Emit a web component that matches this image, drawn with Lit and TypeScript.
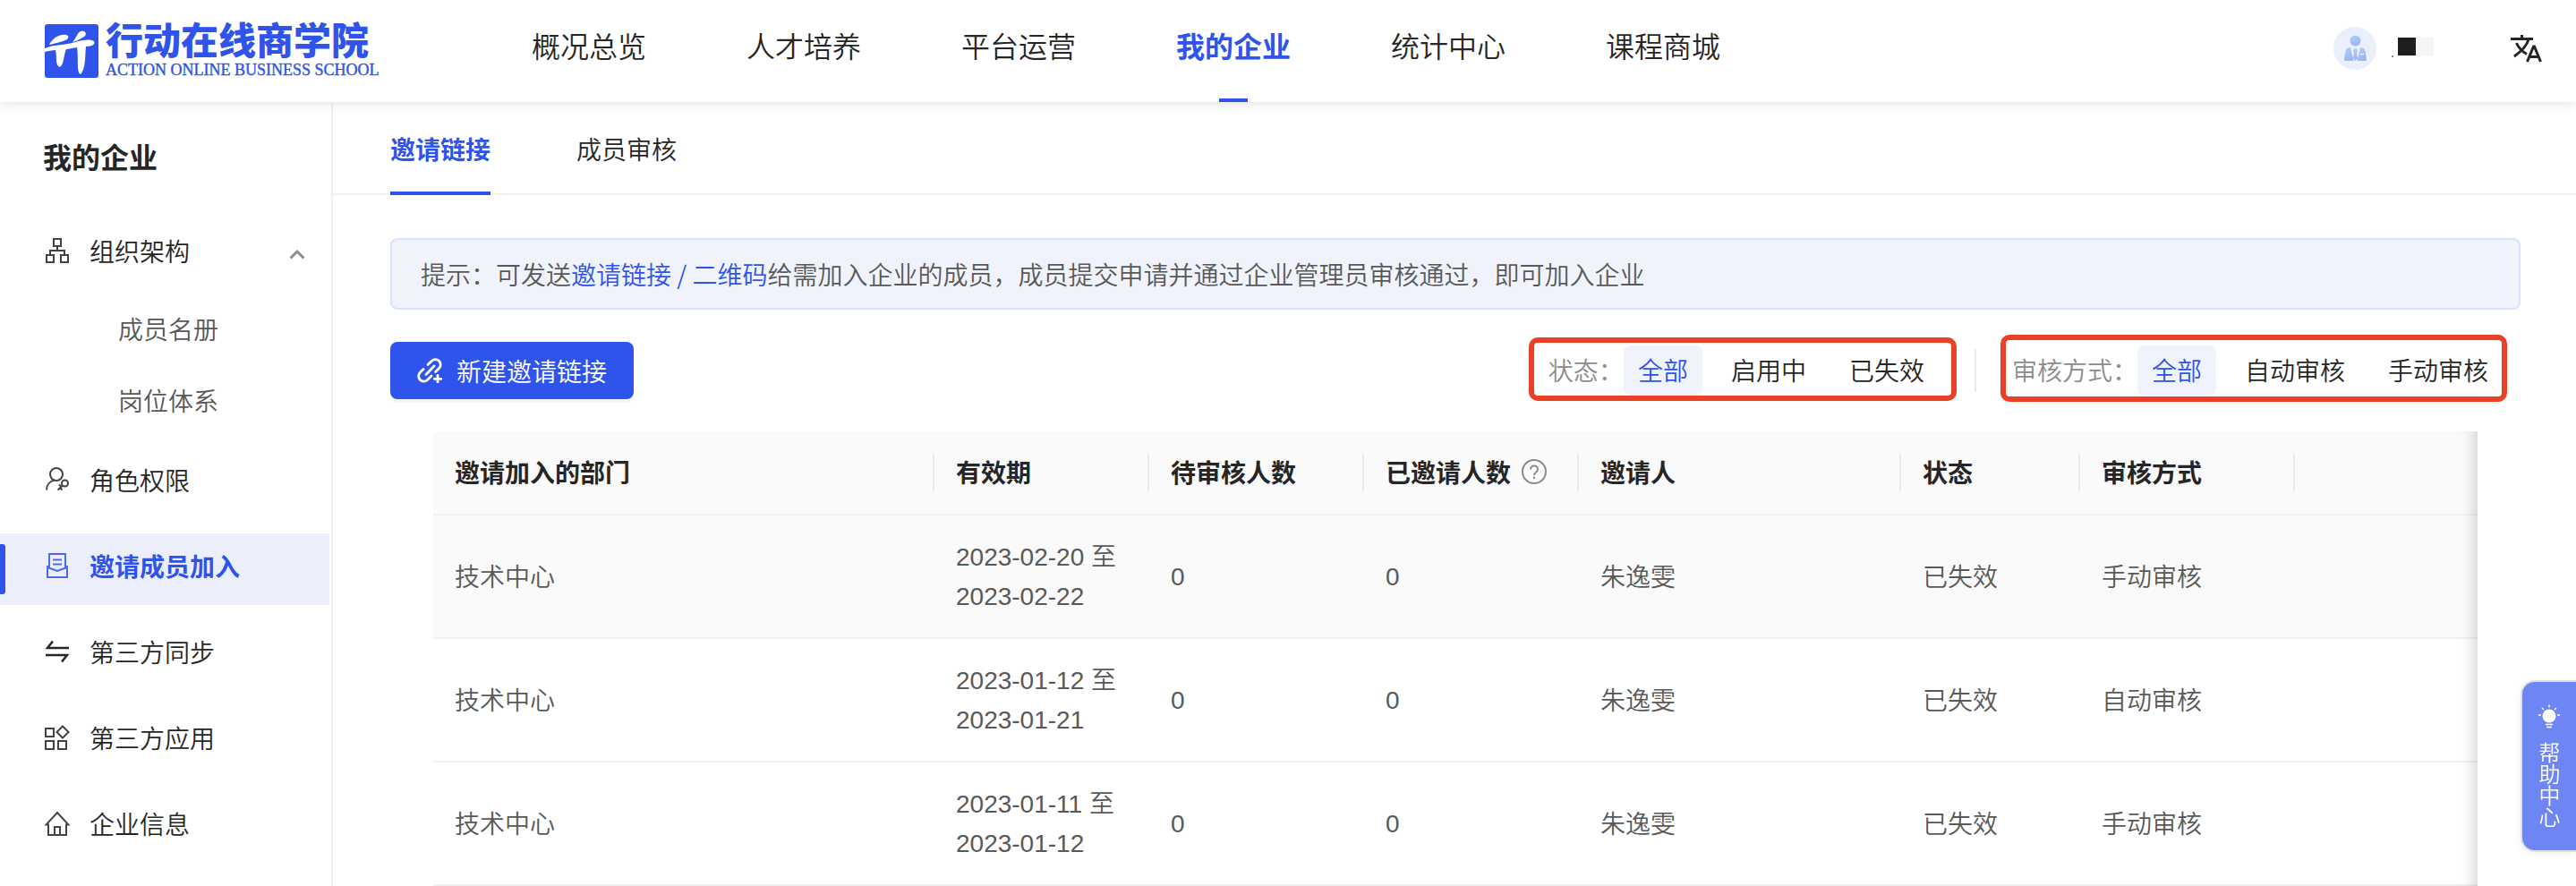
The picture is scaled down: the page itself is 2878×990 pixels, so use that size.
import { LitElement, html, css, svg } from "lit";
import { customElement, state } from "lit/decorators.js";
import { classMap } from "lit/directives/class-map.js";

type MenuItem = { label: string; icon: unknown; children?: string[] };
type Invite = { dept: string; from: string; to: string; pending: number; invited: number; inviter: string; status: string; review: string };

const icons = {
  org: svg`<rect x="10" y="1" width="8" height="8"/><path d="M14 9v5M6 18v-4h16v4"/><rect x="2" y="19" width="8" height="8"/><rect x="18" y="19" width="8" height="8"/>`,
  role: svg`<circle cx="13" cy="8" r="7"/><path d="M2 25.500C2 19.500 6 15.500 11 14.500"/><circle cx="22.500" cy="18" r="3.500"/><path d="M20 20.500l-5.500 5M16 19.500l2.500 2.500M17.500 23.500l2 2"/>`,
  invite: svg`<path d="M5 16V1h18v15M5 15H3v12h22V15h-2M3 16l11 4 11-4M9 7.500h10M9 12.500h10"/>`,
  sync: svg`<path d="M9 2.500L3 10h24M1 18h24l-6 7.500"/>`,
  apps: svg`<rect x="1" y="4" width="9" height="9"/><rect x="1" y="18" width="9" height="9"/><rect x="15" y="18" width="9" height="9"/><path d="M20 1.500l6.500 6.500-6.500 6.500L13.500 8z"/>`,
  home: svg`<path d="M4 15.500H1.500L14 2l12.500 13.500H24V27H4zM11 27v-9h6v9"/>`,
};

const NAV = ["概况总览", "人才培养", "平台运营", "我的企业", "统计中心", "课程商城"];

const MENU: MenuItem[] = [
  { label: "组织架构", icon: icons.org, children: ["成员名册", "岗位体系"] },
  { label: "角色权限", icon: icons.role },
  { label: "邀请成员加入", icon: icons.invite },
  { label: "第三方同步", icon: icons.sync },
  { label: "第三方应用", icon: icons.apps },
  { label: "企业信息", icon: icons.home },
];

const INVITES: Invite[] = [
  { dept: "技术中心", from: "2023-02-20", to: "2023-02-22", pending: 0, invited: 0, inviter: "朱逸雯", status: "已失效", review: "手动审核" },
  { dept: "技术中心", from: "2023-01-12", to: "2023-01-21", pending: 0, invited: 0, inviter: "朱逸雯", status: "已失效", review: "自动审核" },
  { dept: "技术中心", from: "2023-01-11", to: "2023-01-12", pending: 0, invited: 0, inviter: "朱逸雯", status: "已失效", review: "手动审核" },
];

@customElement("app-header")
class AppHeader extends LitElement {
  static styles = css`
    :host { display: flex; height: 114px; padding: 0 38px 0 50px; box-sizing: border-box; background: #fff;
      box-shadow: 0 2px 12px rgba(0, 21, 41, .12); position: relative; z-index: 2; }
    .logo { display: flex; align-items: center; gap: 8px; width: 368px; flex: none; color: #2f54eb; text-decoration: none; }
    .mark { width: 60px; height: 60px; display: block; flex: none; }
    .name { display: block; font: 900 42px/42px "Liberation Sans", "Noto Sans CJK SC", sans-serif; white-space: nowrap; }
    .en { display: block; font: 18px/20px "Liberation Serif", serif; white-space: nowrap; -webkit-text-stroke: 0.4px #2f54eb; }
    nav { display: flex; gap: 112px; margin-left: 176px; }
    .link { display: flex; flex-direction: column; align-items: center; justify-content: space-between; color: #262626; text-decoration: none;
      font-size: 32px; line-height: 48px; padding-top: 26px; white-space: nowrap; }
    .link.on { color: #2f54eb; font-weight: 700; }
    .bar { width: 32px; height: 4px; }
    .on .bar { background: #2f54eb; }
    .user { display: flex; align-items: center; margin-left: auto; padding-bottom: 6px; }
    .avatar { width: 48px; height: 48px; }
    .mask { width: 50px; height: 24px; margin: 0 84px 0 15px; }
    .lang { width: 36px; height: 36px; padding: 0; border: 0; background: none; }
  `;
  render() {
    return html`
      <a class="logo" href="#">
        <svg class="mark" viewBox="0 0 60 60" aria-hidden="true">
          <rect width="60" height="60" rx="3" fill="#2f54eb"/>
          <g fill="#fff">
            <path d="M5 23C8 17 14 12 20 12C26 11 28 14 25 17C19 20 12 21 5 23z"/>
            <path d="M31 20C37 14 36 8 42 7.500C47 8 47 13 43 14.500C39 17 36 19 31 20z"/>
            <path d="M0 27C12 22 22 24 34 20C42 18 50 16 55 19C57 22 53 25 46 25C45 34 46 50 40 56C35 54 38 38 36 26L24 28C21 34 22 44 17 48C11 46 14 36 12 29C8 29 4 30 0 31z"/>
          </g>
        </svg>
        <span><span class="name">行动在线商学院</span><span class="en">ACTION ONLINE BUSINESS SCHOOL</span></span>
      </a>
      <nav>
        ${NAV.map((n) => html`<a href="#" class=${classMap({ link: true, on: n === "我的企业" })}>${n}<span class="bar"></span></a>`)}
      </nav>
      <div class="user">
        <svg class="avatar" viewBox="0 0 48 48" aria-label="头像">
          <defs><linearGradient id="g" x1="0" y1="0" x2="0.4" y2="1"><stop offset="0" stop-color="#b3d0f8"/><stop offset="1" stop-color="#9cb4f5"/></linearGradient></defs>
          <circle cx="24" cy="24" r="24" fill="#e9f0fc"/>
          <g fill="url(#g)"><circle cx="24.500" cy="15.500" r="6"/>
          <path d="M16 23.500c2-.5 2.500-.5 3 0L22.500 38H12c.5-6 1-13 4-14.500z"/>
          <path d="M33 23.500c-2-.5-2.500-.5-3 0L26.500 38H37c-.5-6-1-13-4-14.500z"/>
          <path d="M23 24.500h3l.8 2.500-.8 2.500 1.200 5.500-2.700 3-2.700-3 1.200-5.500-.8-2.500z"/></g>
          <path d="M30 30.500h4" stroke="#fff"/>
        </svg>
        <svg class="mask" viewBox="0 0 50 24" aria-hidden="true">
          <rect x="2" y="20" width="2" height="2" fill="#888"/><rect x="9" y="0" width="20" height="20" fill="#1f1f1f"/><rect x="29" y="0" width="20" height="20" fill="#f5f5f5"/>
        </svg>
        <button class="lang" aria-label="切换语言">
          <svg viewBox="0 0 36 36" width="36" height="36" fill="none" stroke="#262626" stroke-width="3">
            <path d="M1 7.500h25M13.500 3v4.500M21 8C19 16 12 22 5 27M7.500 12c2.500 6 6.500 9.500 11.500 12.500"/>
            <path d="M19.500 33l7-17h1l7 17M22 27.500h10"/>
          </svg>
        </button>
      </div>`;
  }
}

@customElement("side-menu")
class SideMenu extends LitElement {
  @state() open = true;
  static styles = css`
    :host { display: block; width: 372px; flex: none; box-sizing: border-box; border-right: 2px solid #f0f0f0; padding-right: 2px; color: #262626; }
    h2 { margin: 0; padding: 36px 48px 46px; font-size: 32px; line-height: 48px; font-weight: 700; }
    ul { list-style: none; margin: 0; padding: 0; }
    .menu { display: flex; flex-direction: column; gap: 16px; }
    .sub { padding: 8px 0 0; margin-bottom: -8px; }
    .row { display: flex; align-items: center; gap: 22px; width: 100%; height: 80px; box-sizing: border-box; padding: 0 26px 8px 50px;
      border: 0; background: none; font: inherit; color: inherit; text-decoration: none; text-align: left; position: relative; }
    .sub .row { padding: 0 26px 10px 132px; color: #595959; }
    .row svg { width: 28px; height: 28px; flex: none; fill: none; stroke: #434343; stroke-width: 2; }
    .row .chev { margin-left: auto; width: 20px; stroke: #8c8c8c; stroke-width: 3; }
    .row.dark svg { stroke: #262626; stroke-width: 2.5; }
    .row.on { background: #eceffb; color: #2f54eb; font-weight: 700; }
    .row.on svg { stroke: #4a6bf0; }
    .row.on::before { content: ""; position: absolute; left: 0; top: 12px; bottom: 12px; width: 6px; border-radius: 0 3px 3px 0; background: #2f54eb; }
  `;
  render() {
    return html`<h2>我的企业</h2>
      <ul class="menu">
        ${MENU.map((m) => m.children
          ? html`<li>
              <button class="row" aria-expanded=${this.open} @click=${() => (this.open = !this.open)}>
                <svg viewBox="0 0 28 28" aria-hidden="true">${m.icon}</svg>${m.label}
                <svg class="chev" viewBox="0 0 20 28" aria-hidden="true"><path d="M2.500 22.500L10 15l7.500 7.500"/></svg>
              </button>
              ${this.open ? html`<ul class="sub">${m.children.map((c) => html`<li><a class="row" href="#">${c}</a></li>`)}</ul>` : ""}
            </li>`
          : html`<li><a href="#" class=${classMap({ row: true, on: m.label === "邀请成员加入", dark: m.label === "第三方同步" })}>
              <svg viewBox="0 0 28 28" aria-hidden="true">${m.icon}</svg>${m.label}</a></li>`)}
      </ul>`;
  }
}

@customElement("invite-table")
class InviteTable extends LitElement {
  static styles = css`
    :host { display: block; position: relative; }
    :host::after { content: ""; position: absolute; inset: 0 0 0 auto; width: 40px; box-shadow: inset -20px 0 16px -16px rgba(0, 0, 0, .17); pointer-events: none; }
    table { width: 100%; table-layout: fixed; border-collapse: separate; border-spacing: 0; line-height: 44px; color: #595959; }
    th, td { padding: 23px 24px 25px; text-align: left; border-bottom: 2px solid #f0f0f0; }
    th { background: #fafafa; color: #262626; font-weight: 700; white-space: nowrap;
      background-image: linear-gradient(#ebebeb, #ebebeb); background-size: 2px 44px; background-repeat: no-repeat; background-position: right center; }
    th:first-child { border-radius: 4px 0 0 0; }
    th:last-child { background-image: none; }
    td.num { padding: 25px 24px 23px; font-family: "Liberation Sans", "Noto Sans CJK SC", sans-serif; }
    .hover td { background: #fafafa; }
    .w560 { width: 560px; } .w240 { width: 240px; } .w360 { width: 360px; } .w200 { width: 200px; }
    .head { display: flex; align-items: center; gap: 12px; }
    .q { width: 28px; height: 28px; flex: none; }
  `;
  render() {
    return html`<table>
      <colgroup><col class="w560"><col class="w240"><col class="w240"><col class="w240"><col class="w360"><col class="w200"><col class="w240"><col></colgroup>
      <thead><tr>
        <th>邀请加入的部门</th><th>有效期</th><th>待审核人数</th>
        <th><span class="head">已邀请人数<svg class="q" viewBox="0 0 28 28" fill="none" stroke="#8c8c8c" stroke-width="2" aria-label="说明"><circle cx="14" cy="14" r="13"/><path d="M10 11.500c0-5.500 8-5.500 8 0 0 3.500-4 3-4 6.500M14 19.500v2.500"/></svg></span></th>
        <th>邀请人</th><th>状态</th><th>审核方式</th><th></th>
      </tr></thead>
      <tbody>
        ${INVITES.map((r, i) => html`<tr class=${classMap({ hover: i === 0 })}>
          <td>${r.dept}</td><td class="num">${r.from} 至<br>${r.to}</td><td class="num">${r.pending}</td><td class="num">${r.invited}</td>
          <td>${r.inviter}</td><td>${r.status}</td><td>${r.review}</td><td></td>
        </tr>`)}
      </tbody>
    </table>`;
  }
}

@customElement("app-root")
class AppRoot extends LitElement {
  @state() status = "全部";
  @state() review = "全部";
  static styles = css`
    :host { display: flex; flex-direction: column; min-height: 100vh; background: #fff; color: #262626;
      font: 350 28px/44px "Noto Sans CJK SC", "Liberation Sans", sans-serif; }
    .body { display: flex; flex: 1; }
    main { flex: 1; min-width: 0; }
    .tabs { display: flex; gap: 96px; height: 104px; box-sizing: border-box; padding: 0 64px; border-bottom: 2px solid #f0f0f0; }
    .tab { display: block; box-sizing: border-box; height: 104px; padding-top: 30px; color: inherit; text-decoration: none; white-space: nowrap; }
    .tab.on { color: #2f54eb; font-weight: 700; border-bottom: 4px solid #2f54eb; }
    .page { padding: 48px 62px 0 64px; }
    .tip { box-sizing: border-box; min-height: 80px; margin: 0; padding: 16px 32px; border: 2px solid #d9e2ff; border-radius: 8px; background: #f0f3fb; color: #595959; }
    .tip a { color: #2f54eb; text-decoration: none; }
    .tools { display: flex; align-items: center; justify-content: space-between; margin: 36px 0; padding-right: 20px; }
    .new { display: flex; align-items: center; gap: 16px; height: 64px; padding: 0 30px; border: 0; border-radius: 8px; background: #2f54eb; color: #fff; font: inherit;
      box-shadow: 0 4px 0 rgba(0, 0, 0, .045); }
    .filters { display: flex; align-items: center; gap: 40px; }
    .rule { width: 2px; height: 48px; background: #e8e8e8; }
    .group { display: flex; align-items: center; position: relative; color: #8c8c8c; white-space: nowrap; }
    .group::after { content: ""; position: absolute; border: 6px solid #ea4025; border-radius: 10px; pointer-events: none; }
    .group.status::after { inset: -9px -20px -6px -22px; }
    .group.review::after { inset: -12px -5px -7px -13px; }
    .opts { display: flex; gap: 16px; }
    .opt { height: 56px; padding: 0 16px 2px; border: 0; border-radius: 8px; background: none; color: #262626; font: inherit; }
    .group > span { padding-bottom: 2px; }
    .opt.on { background: #f0f3fb; color: #2f54eb; }
    .list { display: block; margin: 0 48px; }
    .help { position: fixed; right: 0; top: 760px; z-index: 3; display: flex; flex-direction: column; align-items: center; gap: 15px; width: 62px; height: 192px;
      padding: 24px 18px 0; border: 2px solid #e0e0e0; border-right: 0; border-radius: 16px 0 0 16px; background: #6e86f3; color: #fff;
      font: 350 24px/24px "Noto Sans CJK SC", sans-serif; box-sizing: border-box; box-shadow: 0 2px 8px rgba(0, 0, 0, .06); }
    .vert { writing-mode: vertical-rl; }
    .help svg { flex: none; }
  `;
  private group(kind: "status" | "review", label: string, options: string[]) {
    return html`<div class="group ${kind}" role="group" aria-label=${label}><span>${label}：</span><div class="opts">
      ${options.map((o) => html`<button class=${classMap({ opt: true, on: this[kind] === o })} aria-pressed=${this[kind] === o} @click=${() => (this[kind] = o)}>${o}</button>`)}
    </div></div>`;
  }
  render() {
    return html`
      <app-header></app-header>
      <div class="body">
        <side-menu></side-menu>
        <main>
          <div class="tabs"><a class="tab on" href="#">邀请链接</a><a class="tab" href="#">成员审核</a></div>
          <div class="page">
            <p class="tip">提示：可发送<a href="#">邀请链接 / 二维码</a>给需加入企业的成员，成员提交申请并通过企业管理员审核通过，即可加入企业</p>
            <div class="tools">
              <button class="new">
                <svg width="28" height="28" viewBox="0 0 28 28" fill="none" stroke="#fff" stroke-width="2.800" stroke-linecap="round" aria-hidden="true">
                  <path d="M12 7.500l4-4a5.800 5.800 0 0 1 8.700 7.800L20.500 15.500"/><path d="M7 12.500l-3.500 3.500a5.800 5.800 0 0 0 8 8.500L16 20"/><path d="M10 18.500l9-9.500M23 19.500v7.500M19.300 23.300h7.500"/>
                </svg>新建邀请链接
              </button>
              <div class="filters">
                ${this.group("status", "状态", ["全部", "启用中", "已失效"])}
                <span class="rule"></span>
                ${this.group("review", "审核方式", ["全部", "自动审核", "手动审核"])}
              </div>
            </div>
            <invite-table class="list"></invite-table>
          </div>
        </main>
      </div>
      <button class="help">
        <svg width="24" height="28" viewBox="0 0 24 28" fill="none" stroke="#fff" stroke-width="1.500" aria-hidden="true">
          <circle cx="12" cy="14" r="7.500" fill="#fff" stroke="none"/><path d="M12 1.500v3M4 5l2 2M20 5l-2 2M0 13h3M21 13h3M8 23.500h8M9 26.500h6"/>
        </svg>
        <span class="vert">帮助中心</span>
      </button>`;
  }
}
